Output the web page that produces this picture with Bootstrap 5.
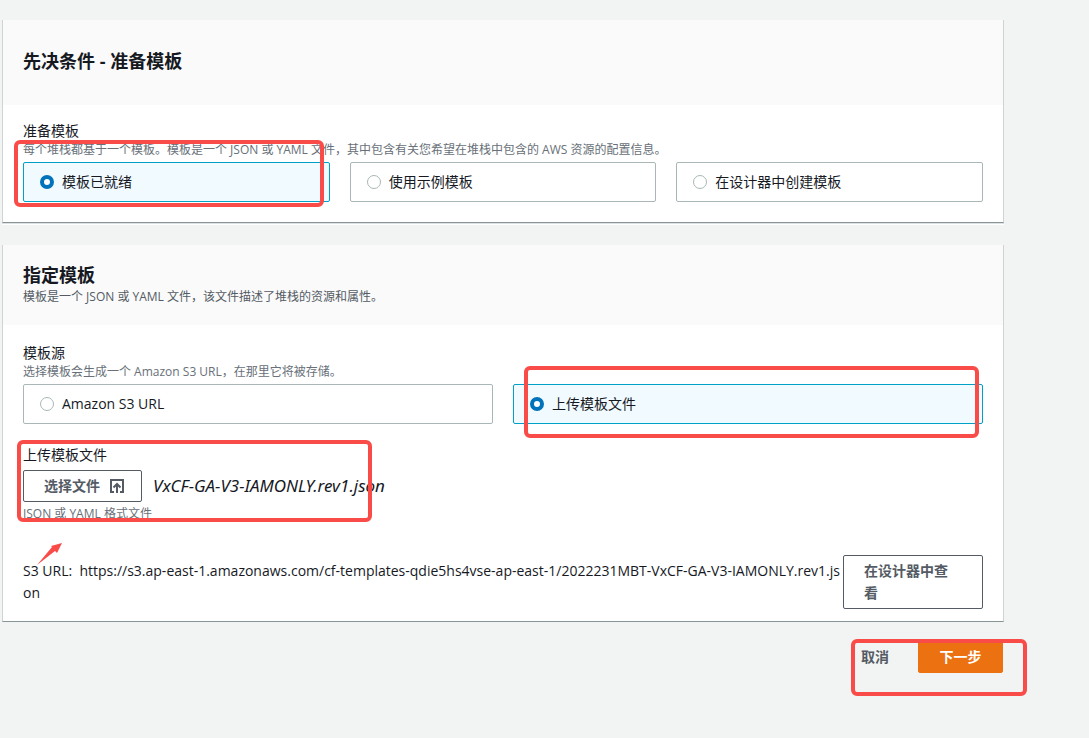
<!DOCTYPE html>
<html lang="zh-CN">
<head>
<meta charset="utf-8">
<meta name="viewport" content="width=device-width, initial-scale=1">
<title>指定模板</title>
<link href="https://cdn.jsdelivr.net/npm/bootstrap@5.3.0/dist/css/bootstrap.min.css" rel="stylesheet">
<style>
  body { background: #f2f3f3; color: #16191f; font: 14px/22px "Open Sans", "Noto Sans CJK SC", sans-serif; }
  .wizard { padding: 20px 85px 65px 2px; }
  .panel { background: #fff; border: 1px solid #d0d3d3; border-width: 0 1px 1px; border-bottom-color: #879596; }
  .panel-prepare { margin-bottom: 22px; box-shadow: 0 1px #dde1e1, 0 2px #fff; }
  .panel-head { background: #fafafa; padding: 18px 20px; }
  .panel-head-tall { padding: 29px 20px 32px; }
  .panel-head h2 { font-size: 18px; line-height: 24px; font-weight: 700; margin: 0; }
  .panel-head p { font-size: 12px; line-height: 20px; color: #545b64; margin: 0; }
  .panel-main { padding: 17px 20px 20px; }
  .panel-prepare .panel-main { padding-top: 15px; }
  fieldset legend, .field-title { font-size: 14px; line-height: 22px; margin: 0; display: block; float: none; }
  .hint { font-size: 12px; line-height: 16px; color: #687078; margin: 0 0 4px; }
  .tiles { --bs-gutter-x: 20px; }
  .tile { border: 1px solid #aab7b8; border-radius: 2px; height: 40px; padding: 0 16px; gap: 8px; cursor: pointer; }
  .tile:has(:checked) { background: #f1faff; border-color: #00a1c9; }
  .tile .form-check-input { width: 14px; height: 14px; margin: 0; border: 1px solid #aab7b8; flex: none; box-shadow: none; }
  .tile .form-check-input:checked { background: #fff; border: 4px solid #0073bb; }
  .btn { --bs-btn-font-size: 14px; --bs-btn-line-height: 22px; --bs-btn-font-weight: 700; --bs-btn-border-radius: 2px; --bs-btn-padding-x: 20px; --bs-btn-padding-y: 4px; }
  .btn-plain { --bs-btn-color: #545b64; --bs-btn-border-color: #545b64; --bs-btn-bg: #fff; --bs-btn-hover-color: #16191f; --bs-btn-hover-border-color: #16191f; }
  .btn-choose { gap: 9px; }
  .btn-cancel { --bs-btn-color: #545b64; padding: 5px 29px 5px 0; border: 0; }
  .btn-next { --bs-btn-color: #fff; --bs-btn-bg: #ec7211; --bs-btn-border-color: #ec7211; --bs-btn-hover-color: #fff; --bs-btn-hover-bg: #eb5f07; min-width: 85px; }
  .upload { margin-top: 20px; }
  .file-name { font-family: "Noto Sans", "Noto Sans CJK SC", sans-serif; font-size: 17px; margin-left: 11px; }
  .s3-row { margin-top: 33px; margin-bottom: -8px; }
  .s3-url { word-break: break-all; padding-top: 5px; }
  .btn-view { width: 140px; flex: none; padding-right: 28px; }
  .actions { margin-top: 19px; padding-right: 1px; }
  /* highlight frames drawn over the form */
  .ring { position: absolute; border: 4px solid #f94c48; border-radius: 6px; pointer-events: none; z-index: 2; }
  .ring-ready { inset: -22px 6px -5px -9px; }
  .ring-upload { inset: -18px 4px -14px 11px; }
  .ring-file { inset: -4px auto 0 -6px; width: 355px; }
  .ring-next { inset: -2px -24px -23px -10px; }
  .pointer { position: absolute; left: 14px; top: -12px; }
</style>
</head>
<body>
<main class="wizard">
  <section class="panel panel-prepare">
    <div class="panel-head panel-head-tall"><h2>先决条件 - 准备模板</h2></div>
    <div class="panel-main">
      <fieldset>
        <legend>准备模板</legend>
        <p class="hint">每个堆栈都基于一个模板。模板是一个 JSON 或 YAML 文件，其中包含有关您希望在堆栈中包含的 AWS 资源的配置信息。</p>
        <div class="row tiles">
          <div class="col-4"><div class="position-relative">
            <label class="tile d-flex align-items-center"><input class="form-check-input" type="radio" name="prepare" checked>模板已就绪</label>
            <span class="ring ring-ready"></span>
          </div></div>
          <div class="col-4"><label class="tile d-flex align-items-center"><input class="form-check-input" type="radio" name="prepare">使用示例模板</label></div>
          <div class="col-4"><label class="tile d-flex align-items-center"><input class="form-check-input" type="radio" name="prepare">在设计器中创建模板</label></div>
        </div>
      </fieldset>
    </div>
  </section>

  <section class="panel">
    <div class="panel-head">
      <h2>指定模板</h2>
      <p>模板是一个 JSON 或 YAML 文件，该文件描述了堆栈的资源和属性。</p>
    </div>
    <div class="panel-main">
      <fieldset>
        <legend>模板源</legend>
        <p class="hint">选择模板会生成一个 Amazon S3 URL，在那里它将被存储。</p>
        <div class="row tiles">
          <div class="col-6"><label class="tile d-flex align-items-center"><input class="form-check-input" type="radio" name="source">Amazon S3 URL</label></div>
          <div class="col-6"><div class="position-relative">
            <label class="tile d-flex align-items-center"><input class="form-check-input" type="radio" name="source" checked>上传模板文件</label>
            <span class="ring ring-upload"></span>
          </div></div>
        </div>
      </fieldset>

      <div class="upload position-relative">
        <label class="field-title mb-1" for="choose-file">上传模板文件</label>
        <div class="d-flex align-items-center mb-1">
          <button type="button" id="choose-file" class="btn btn-plain btn-choose d-flex align-items-center pe-3">选择文件
            <svg width="16" height="16" viewBox="0 0 16 16" fill="none" stroke="currentColor" stroke-width="2" aria-hidden="true"><path d="M5 14H2V2h12v12h-3M8 15V6M4.500 9.500 8 6l3.500 3.500"/></svg>
          </button>
          <em class="file-name">VxCF-GA-V3-IAMONLY.rev1.json</em>
        </div>
        <p class="hint mb-0">JSON 或 YAML 格式文件</p>
        <span class="ring ring-file"></span>
      </div>

      <div class="s3-row d-flex position-relative">
        <div class="s3-url flex-fill">S3 URL:&nbsp; https://s3.ap-east-1.amazonaws.com/cf-templates-qdie5hs4vse-ap-east-1/2022231MBT-VxCF-GA-V3-IAMONLY.rev1.json</div>
        <button type="button" class="btn btn-plain btn-view text-start">在设计器中查看</button>
        <svg class="pointer" width="26" height="22" viewBox="0 0 26 22" fill="#f94c48" aria-hidden="true"><path d="M0 22 15 4 14 3 25 0 20 10 18 8Z"/></svg>
      </div>
    </div>
  </section>

  <div class="actions d-flex justify-content-end">
    <div class="d-flex position-relative">
      <button type="button" class="btn btn-cancel">取消</button>
      <button type="button" class="btn btn-next">下一步</button>
      <span class="ring ring-next"></span>
    </div>
  </div>
</main>
<script src="https://cdn.jsdelivr.net/npm/bootstrap@5.3.0/dist/js/bootstrap.bundle.min.js"></script>
</body>
</html>
